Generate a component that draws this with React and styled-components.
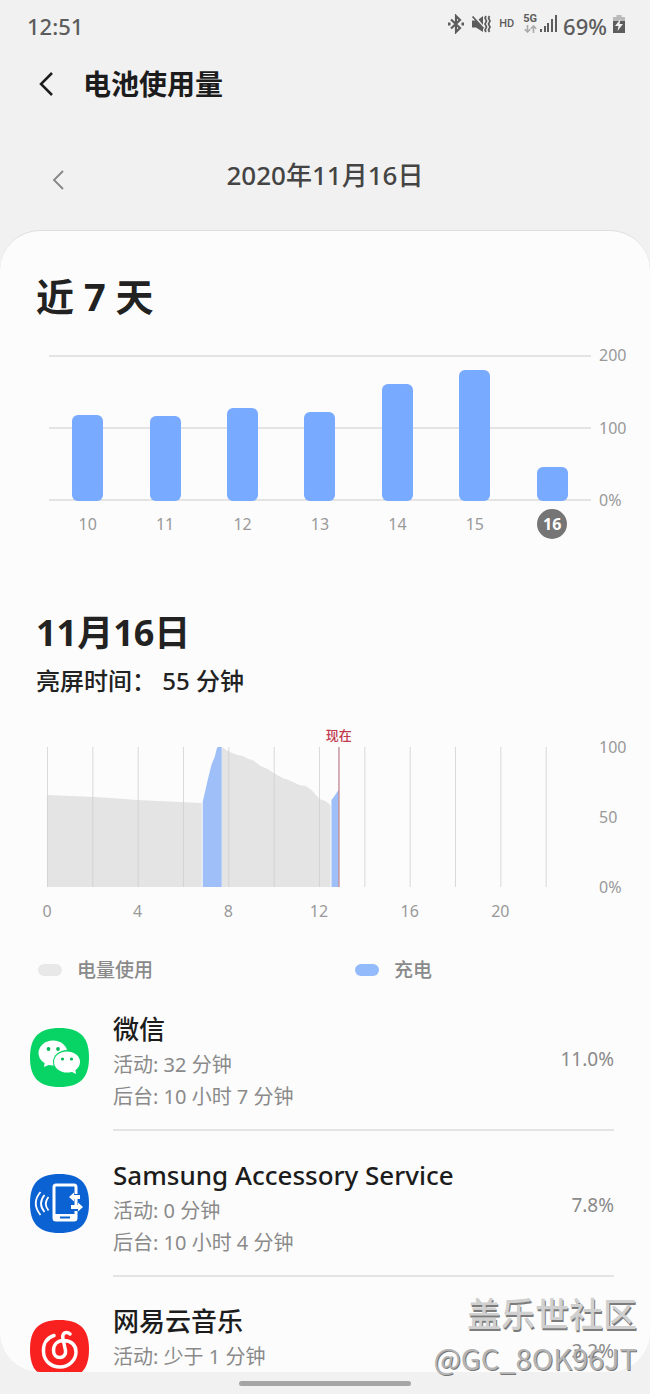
import React from "react";
import styled, { createGlobalStyle } from "styled-components";

const GlobalStyle = createGlobalStyle`
  * {
    box-sizing: border-box;
  }

  body {
    margin: 0;
    background: #f1f1f1;
    color: #222;
    font-family: "Noto Sans", "Noto Sans CJK SC", sans-serif;
    font-size: 16px;
  }

  h1, h2, h3, p, ul {
    margin: 0;
    padding: 0;
  }
`;

const MAX_USAGE = 200;

const week = [
  { day: "10", value: 118 },
  { day: "11", value: 117 },
  { day: "12", value: 128 },
  { day: "13", value: 122 },
  { day: "14", value: 160 },
  { day: "15", value: 180 },
  { day: "16", value: 46, selected: true },
];

const hours = [0, 4, 8, 12, 16, 20];
const gridHours = [0, 2, 4, 6, 8, 10, 12, 14, 16, 18, 20, 22];
const NOW = 12.87;

const StatusBar = () => (
  <Status>
    <span>12:51</span>
    <StatusIcons>
      <svg width="18" height="20" viewBox="0 0 18 20" fill="none" stroke="#5c5c5c" strokeWidth="2.200">
        <path d="M4 5.500 13 14 9 18V2l4 4-9 8.500" />
        <path d="M1 10h2.500M14.500 10H17" strokeWidth="2.800" />
      </svg>
      <svg width="20" height="20" viewBox="0 0 20 20" fill="none" stroke="#5c5c5c">
        <path d="M1 6.500h4L12 14v4l-7-4.500H1z" fill="#5c5c5c" stroke="none" />
        <path d="M7.500 5.500 12 2v9z" fill="#5c5c5c" stroke="none" />
        <path d="M1.500 2.500l11 12" strokeWidth="1.800" />
        <path d="M15 2l-1 2 1.500 3-1.500 3 1.500 3-1.500 3 1 2M18.500 2 17.500 4 19 7l-1.500 3 1.500 3-1.500 3 1 2" strokeWidth="1.700" />
      </svg>
      <Hd>HD</Hd>
      <Mobile>
        <Network>
          <b>5G</b>
          <svg width="13" height="8" viewBox="0 0 13 8" fill="none" stroke="#aaa" strokeWidth="1.600">
            <path d="M3.500 0v7M.8 4.200 3.500 7l2.700-2.800M9.500 8V1M6.800 3.800 9.500 1l2.700 2.800" />
          </svg>
        </Network>
        <svg width="17" height="17" viewBox="0 0 17 17" fill="#5c5c5c">
          <path d="M0 14h2v3H0zM4 11h2v6H4zM7 8h2v9H7zM11 4h2v13h-2zM15 0h2v17h-2z" />
        </svg>
      </Mobile>
      <Percent>69%</Percent>
      <svg width="12" height="18" viewBox="0 0 12 18">
        <path d="M3.500 0h5v2H12v5H0V2h3.500z" fill="#b9b9b9" />
        <path d="M0 6h12v12H0z" fill="#5c5c5c" />
        <path d="M7.500 4 2 11h3.500L4.500 16 10 9H6.500z" fill="#f1f1f1" />
      </svg>
    </StatusIcons>
  </Status>
);

const WeekChart = () => (
  <ChartRow>
    <WeekPlot>
      <Bars>
        {week.map(({ day, value }) => (
          <BarCell key={day}>
            <Bar style={{ height: `${(value / MAX_USAGE) * 100}%` }} />
          </BarCell>
        ))}
      </Bars>
      <Days>
        {week.map(({ day, selected }) => (
          <Day key={day} $selected={selected}>
            <span>{day}</span>
          </Day>
        ))}
      </Days>
    </WeekPlot>
    <Scale>
      <span>200</span>
      <span>100</span>
      <span>0%</span>
    </Scale>
  </ChartRow>
);

const DayChart = () => (
  <ChartRow>
    <DayPlot>
      <Now style={{ left: `${(NOW / 24) * 100}%` }}>现在</Now>
      <Level viewBox="0 0 545 140" preserveAspectRatio="none">
        <path
          d="M0 48 48 50 65 51 90 53 155 56V140H0zM175 0 183 5 191 8 196 9 202 12 206 13 214 19 221 22 227 26 236 31 242 33 253 38 259 39 265 43 273 52 279 54 284 58V140H175z"
          fill="#e4e4e4"
        />
        <path
          d="M156 55 161 33 165 17 168 10 170 2 171 0H175V140H156zM285 53 288 49 292 43V140H285z"
          fill="#9fbff8"
        />
        {gridHours.map(hour => (
          <path
            key={hour}
            d={`M${(hour / 24) * 545 + 0.5} 0V140`}
            stroke="#cfcfcf"
            strokeOpacity="0.8"
          />
        ))}
        <path d="M292.5 0V140" stroke="#b0606f" />
      </Level>
      <Hours>
        {hours.map(hour => (
          <li key={hour}>
            <span>{hour}</span>
          </li>
        ))}
      </Hours>
    </DayPlot>
    <Scale>
      <span>100</span>
      <span>50</span>
      <span>0%</span>
    </Scale>
  </ChartRow>
);

const SQUIRCLE = "M29.500 0C50 0 59 9 59 29.500S50 59 29.500 59 0 50 0 29.500 9 0 29.500 0z";

const WeChatIcon = () => (
  <AppIcon viewBox="0 0 59 59">
    <path d={SQUIRCLE} fill="#07d465" />
    <g fill="#fff">
      <ellipse cx="23" cy="25" rx="14.500" ry="12.500" />
      <path d="M15 33l-1 6 7-3z" />
      <ellipse cx="37" cy="34" rx="14" ry="12" fill="#07d465" />
      <ellipse cx="37" cy="34" rx="13" ry="10.500" />
      <path d="M40 43l6 3-1-6z" />
    </g>
    <g fill="#07b85a">
      <circle cx="18.500" cy="21" r="1.900" />
      <circle cx="28" cy="21" r="1.900" />
      <circle cx="32.500" cy="31" r="1.600" />
      <circle cx="41.500" cy="31" r="1.600" />
    </g>
  </AppIcon>
);

const AccessoryIcon = () => (
  <AppIcon viewBox="0 0 59 59">
    <path d={SQUIRCLE} fill="#0b62d2" />
    <g fill="none" stroke="#fff" strokeWidth="1.800">
      <path d="M10.500 18Q1 29 10.500 41M14.500 21Q7.500 29.500 14.500 38M18.500 23Q13 29.500 18.500 36.500" />
      <path d="M46 20V13Q46 11 44 11H26Q24 11 24 13V44Q24 46 26 46H44Q46 46 46 44V37M46 25V31" strokeWidth="3" />
      <path d="M24 43H47" strokeWidth="6" />
    </g>
    <path d="M30 42.500h10v2H30z" fill="#0b62d2" />
    <path d="M39 23l5-4.500V21h6v4h-6v2.500zM53 33l-5-4.500V31h-7v4h7v2.500z" fill="#fff" />
  </AppIcon>
);

const NeteaseIcon = () => (
  <AppIcon viewBox="0 0 59 59">
    <path d={SQUIRCLE} fill="#f8211f" />
    <path
      d="M24 15.500C16 18 13 25 13.500 32 14 41 21 47 30 47S46 40 46 32C46 25 41 20.500 34 20.500 27 20.500 23.500 25 23.500 30.500 23.500 34.500 26 37.500 30 37.500S36 34 35.500 30.500L33 19C32 14.500 34 12.500 36.500 12.500 38 12.500 39 13 40 14"
      fill="none"
      stroke="#fff"
      strokeWidth="3.500"
      strokeLinecap="round"
    />
  </AppIcon>
);

const apps = [
  {
    name: "微信",
    icon: <WeChatIcon />,
    active: "32 分钟",
    background: "10 小时 7 分钟",
    usage: "11.0%",
  },
  {
    name: "Samsung Accessory Service",
    icon: <AccessoryIcon />,
    active: "0 分钟",
    background: "10 小时 4 分钟",
    usage: "7.8%",
  },
  {
    name: "网易云音乐",
    icon: <NeteaseIcon />,
    active: "少于 1 分钟",
    usage: "3.2%",
  },
];

const AppRow = ({ name, icon, active, background, usage }) => (
  <Item>
    {icon}
    <ItemBody>
      <ItemText>
        <AppName>{name}</AppName>
        <Detail>活动: {active}</Detail>
        {background && <Detail>后台: {background}</Detail>}
      </ItemText>
      <Usage>{usage}</Usage>
    </ItemBody>
  </Item>
);

const App = () => (
  <Screen>
    <GlobalStyle />
    <StatusBar />
    <Header>
      <IconButton type="button" aria-label="返回">
        <svg width="16" height="26" viewBox="0 0 16 26" fill="none" stroke="#1c1c1c" strokeWidth="2.500">
          <path d="M14 2 3 13l11 11" />
        </svg>
      </IconButton>
      <Title>电池使用量</Title>
    </Header>
    <DatePicker>
      <IconButton type="button" aria-label="前一天">
        <svg width="12" height="20" viewBox="0 0 12 20" fill="none" stroke="#858585" strokeWidth="1.800">
          <path d="M11 1 2 10l9 9" />
        </svg>
      </IconButton>
      <DateText>2020年11月16日</DateText>
    </DatePicker>
    <Card>
      <Heading $size={38}>近 7 天</Heading>
      <WeekChart />
      <DaySection>
        <Heading $size={36}>11月16日</Heading>
        <ScreenTime>亮屏时间： 55 分钟</ScreenTime>
        <DayChart />
      </DaySection>
      <Legend>
        <LegendItem $color="#e8e8e8">电量使用</LegendItem>
        <LegendItem $color="#93bbfb">充电</LegendItem>
      </Legend>
      <ul>
        {apps.map(app => (
          <AppRow key={app.name} {...app} />
        ))}
      </ul>
    </Card>
    <NavBar>
      <Handle />
    </NavBar>
    <Watermark>
      <strong>盖乐世社区</strong>
      <span>@GC_8OK96JT</span>
    </Watermark>
  </Screen>
);

const Screen = styled.div`
  position: relative;
  display: flex;
  flex-direction: column;
  height: 100vh;
  overflow: hidden;
`;

const Status = styled.div`
  display: flex;
  flex: none;
  align-items: center;
  justify-content: space-between;
  height: 52px;
  padding: 0 25px 0 27px;
  color: #5c5c5c;
  font-size: 22px;
  font-weight: 500;
`;

const StatusIcons = styled.div`
  display: flex;
  align-items: center;
  gap: 6px;

  > * {
    margin-bottom: 5px;
  }
`;

const Hd = styled.span`
  padding: 0 3px 0 2px;
  font-family: Roboto, sans-serif;
  font-size: 11px;
`;

const Mobile = styled.span`
  display: flex;
  align-items: center;
  gap: 3px;
`;

const Network = styled.span`
  display: flex;
  flex-direction: column;
  align-items: center;
  gap: 1px;
  font-family: Roboto, sans-serif;
  font-size: 11px;
  line-height: 10px;
`;

const Percent = styled.span`
  && {
    margin: 0;
  }
`;

const Header = styled.header`
  display: flex;
  flex: none;
  align-items: center;
  gap: 29px;
  height: 64px;
  padding-left: 38px;
`;

const IconButton = styled.button`
  display: flex;
  padding: 0;
  border: 0;
  background: none;
  cursor: pointer;
`;

const Title = styled.h1`
  color: #1c1c1c;
  font-size: 28px;
  font-weight: 700;
  line-height: 40px;
`;

const DatePicker = styled.div`
  display: grid;
  flex: none;
  grid-template-columns: 1fr auto 1fr;
  align-items: center;
  height: 114px;
  padding: 4px 52px 0;

  ${IconButton} {
    padding-top: 10px;
  }
`;

const DateText = styled.h2`
  color: #444;
  font-size: 26px;
  font-weight: 500;
  line-height: 40px;
`;

const Card = styled.main`
  flex: 1;
  min-height: 0;
  overflow: hidden;
  padding: 37px 23px 0 36px;
  border-top: 1px solid #dedede;
  border-radius: 40px;
  background: #fcfcfc;
`;

const Heading = styled.h2`
  font-size: ${({ $size }) => $size}px;
  font-weight: 700;
  line-height: 56px;
`;

const ChartRow = styled.div`
  display: flex;
  gap: 8px;
  padding: 21px 0 0 13px;
`;

const Scale = styled.div`
  display: flex;
  flex: none;
  flex-direction: column;
  justify-content: space-between;
  width: 28px;
  height: 165px;
  color: #999;
  line-height: 20px;
`;

const WeekPlot = styled.div`
  flex: 1;
  padding-top: 10px;
`;

const Bars = styled.div`
  display: flex;
  height: 146px;
  background: linear-gradient(#e4e4e4 2px, transparent 2px) 0 0 / 100% 72px;
`;

const BarCell = styled.div`
  display: flex;
  flex: 1;
  align-items: flex-end;
  justify-content: center;
`;

const Bar = styled.div`
  width: 31px;
  border-radius: 6px;
  background: #78aaff;
`;

const Days = styled.div`
  display: flex;
  padding-top: 8px;
`;

const Day = styled.div`
  display: flex;
  flex: 1;
  justify-content: center;
  color: ${({ $selected }) => ($selected ? "#fff" : "#999")};
  font-weight: ${({ $selected }) => ($selected ? 700 : 400)};

  span {
    width: 30px;
    border-radius: 50%;
    background: ${({ $selected }) => ($selected ? "#757575" : "none")};
    line-height: 30px;
    text-align: center;
  }
`;

const DaySection = styled.section`
  padding-top: 66px;

  ${ChartRow} {
    padding: 36px 0 0 11px;
  }

  ${Scale} {
    height: 160px;
  }
`;

const ScreenTime = styled.p`
  font-size: 24px;
  font-weight: 500;
  line-height: 40px;
`;

const DayPlot = styled.div`
  position: relative;
  flex: 1;
  padding-top: 10px;
`;

const Now = styled.span`
  position: absolute;
  top: -12px;
  transform: translateX(-50%);
  color: #c0394c;
  font-size: 13px;
  font-weight: 500;
  line-height: 20px;
`;

const Level = styled.svg`
  display: block;
  width: 100%;
  height: 140px;
`;

const Hours = styled.ul`
  display: flex;
  padding-top: 14px;
  color: #999;
  line-height: 20px;
  list-style: none;

  li {
    flex: 1;
  }

  span {
    display: inline-block;
    transform: translateX(-50%);
  }
`;

const Legend = styled.div`
  display: grid;
  grid-template-columns: 317px 1fr;
  padding: 34px 0 0 2px;
`;

const LegendItem = styled.span`
  display: flex;
  align-items: center;
  gap: 15px;
  color: #8a8a8a;
  font-size: 19px;
  font-weight: 500;
  line-height: 30px;

  &::before {
    width: 24px;
    height: 12px;
    border-radius: 6px;
    background: ${({ $color }) => $color};
    content: "";
  }
`;

const Item = styled.li`
  display: flex;
  gap: 24px;
  margin-left: -6px;
  padding-right: 13px;
  list-style: none;
`;

const AppIcon = styled.svg`
  flex: none;
  width: 59px;
  height: 59px;
  margin-top: 43px;
`;

const ItemBody = styled.div`
  display: flex;
  flex: 1;
  align-items: center;
  justify-content: space-between;
  height: 146px;
  border-bottom: 2px solid #e4e4e4;
`;

const ItemText = styled.div`
  align-self: flex-start;
  padding-top: 24px;
`;

const AppName = styled.h3`
  color: #1c1c1c;
  font-size: 26px;
  font-weight: 500;
  line-height: 40px;
`;

const Detail = styled.p`
  color: #8a8a8a;
  font-size: 20px;
  line-height: 32px;
`;

const Usage = styled.span`
  padding-top: 4px;
  color: #8a8a8a;
  font-size: 19px;
`;

const NavBar = styled.div`
  display: flex;
  flex: none;
  align-items: center;
  justify-content: center;
  height: 22px;
`;

const Handle = styled.div`
  width: 172px;
  height: 5px;
  border-radius: 3px;
  background: #a5a5a5;
`;

const Watermark = styled.div`
  position: absolute;
  right: 13px;
  bottom: 15px;
  display: flex;
  flex-direction: column;
  align-items: flex-end;
  color: #b4b4b4;
  font-family: "Noto Sans CJK SC", sans-serif;
  font-size: 29px;
  line-height: 44px;
  text-shadow: 1px 1px 0 #777;
  pointer-events: none;

  strong {
    color: #d0d0d0;
    font-size: 34px;
    font-weight: 500;
    text-shadow: 1px 2px 0 #7c7c7c;
  }
`;

export default App;
